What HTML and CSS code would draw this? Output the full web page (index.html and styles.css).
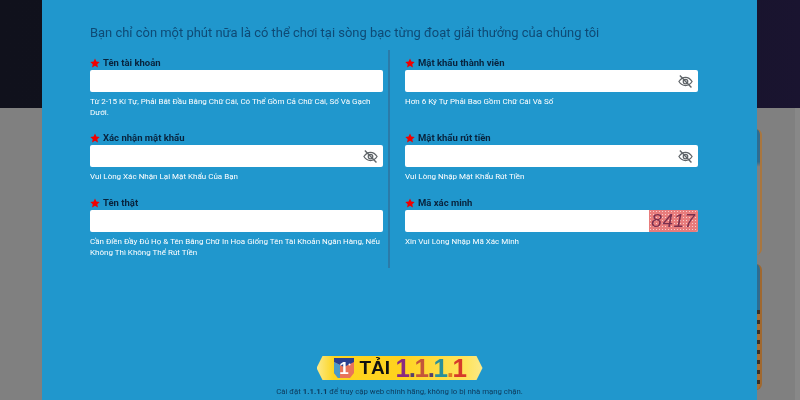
FILE: index.html
```html
<!DOCTYPE html>
<html lang="vi">
<head>
<meta charset="utf-8">
<title>Đăng ký</title>
<link rel="stylesheet" href="styles.css">
</head>
<body>
<svg class="defs" width="0" height="0" aria-hidden="true">
  <symbol id="star" viewBox="0 0 24 24"><path d="M12 1l3.4 7.3 7.9 1-5.8 5.4 1.5 7.9L12 18.7l-7 3.9 1.5-7.9L.7 9.3l7.9-1z"/></symbol>
  <symbol id="eye" viewBox="0 0 24 24">
    <path d="M1.5 12C4.5 7.5 8 5.5 12 5.5s7.500 2 10.500 6.500c-3 4.500-6.500 6.500-10.500 6.500S4.500 16.500 1.500 12z" fill="none" stroke="currentColor" stroke-width="2"/>
    <circle cx="12" cy="12" r="3.600" fill="none" stroke="currentColor" stroke-width="2"/>
    <path d="M3 2.500l18.500 19" fill="none" stroke="currentColor" stroke-width="2.200"/>
  </symbol>
</svg>
<div class="page">
  <div class="hero"></div>
  <div class="lower">
    <div class="cards">
      <div class="card"></div>
      <div class="card card-b"></div>
    </div>
  </div>
  <main class="modal">
    <h1 class="title">Bạn chỉ còn một phút nữa là có thể chơi tại sòng bạc từng đoạt giải thưởng của chúng tôi</h1>
    <form class="form">
      <div class="field left">
        <label class="label"><svg class="star"><use href="#star"/></svg>Tên tài khoản</label>
        <div class="input"></div>
        <p class="hint">Từ 2-15 Kí Tự, Phải Bắt Đầu Bằng Chữ Cái, Có Thể Gồm Cả Chữ Cái, Số Và Gạch Dưới.</p>
      </div>
      <div class="field right">
        <label class="label"><svg class="star"><use href="#star"/></svg>Mật khẩu thành viên</label>
        <div class="input"><svg class="eye"><use href="#eye"/></svg></div>
        <p class="hint">Hơn 6 Ký Tự Phải Bao Gồm Chữ Cái Và Số</p>
      </div>
      <div class="field left">
        <label class="label"><svg class="star"><use href="#star"/></svg>Xác nhận mật khẩu</label>
        <div class="input"><svg class="eye"><use href="#eye"/></svg></div>
        <p class="hint">Vui Lòng Xác Nhận Lại Mật Khẩu Của Bạn</p>
      </div>
      <div class="field right">
        <label class="label"><svg class="star"><use href="#star"/></svg>Mật khẩu rút tiền</label>
        <div class="input"><svg class="eye"><use href="#eye"/></svg></div>
        <p class="hint">Vui Lòng Nhập Mật Khẩu Rút Tiền</p>
      </div>
      <div class="field left last">
        <label class="label"><svg class="star"><use href="#star"/></svg>Tên thật</label>
        <div class="input"></div>
        <p class="hint">Cần Điền Đầy Đủ Họ &amp; Tên Bằng Chữ In Hoa Giống Tên Tài Khoản Ngân Hàng, Nếu Không Thì Không Thể Rút Tiền</p>
      </div>
      <div class="field right last">
        <label class="label"><svg class="star"><use href="#star"/></svg>Mã xác minh</label>
        <div class="input"><span class="captcha">8417</span></div>
        <p class="hint">Xin Vui Lòng Nhập Mã Xác Minh</p>
      </div>
    </form>
    <div class="promo">
      <div class="banner">
        <svg class="shield" viewBox="0 0 20 20">
          <path d="M0 0h20v15l-4 5H4l-4-5z" fill="#e8745a"/>
          <path d="M0 0h20v4l-10 5-10-5z" fill="#2a3f8f"/>
          <path d="M0 4l6 3v13H4l-4-5z" fill="#4a9ac8"/>
          <text x="10" y="16" class="shield-num">1</text>
          <circle cx="15.500" cy="6.500" r="1" fill="#fff"/>
        </svg>
        <span class="tai">TẢI</span>
        <span class="ver"><span class="ch c1">1</span><span class="ch c0">.</span><span class="ch c2">1</span><span class="ch c0">.</span><span class="ch c3">1</span><span class="ch c4">.</span><span class="ch c5">1</span></span>
      </div>
      <p class="promo-text">Cài đặt <b>1.1.1.1</b> để truy cập web chính hãng, không lo bị nhà mạng chặn.</p>
    </div>
  </main>
</div>
</body>
</html>
```

FILE: styles.css
```css
* { box-sizing: border-box; }
html, body { margin: 0; padding: 0; }
body { font-family: Roboto, "Liberation Sans", Arial, sans-serif; background: #808080; }
.defs { position: absolute; }
.page { position: relative; width: 800px; height: 400px; overflow: hidden; display: flex; flex-direction: column; filter: blur(0.35px); }
.hero { height: 108px; flex: none; background: linear-gradient(90deg, #10111c 0%, #11121e 50%, #1a1430 100%); }
.lower { flex: 1; background: linear-gradient(90deg, #808080 0 795px, #888 795px); padding: 21px 0 0 700px; }
.cards { width: 62px; display: flex; flex-direction: column; gap: 9px; }
.card { height: 126px; border-radius: 6px; background: linear-gradient(180deg, #2f6c90 0 26%, #808080 30%); border-right: 2px solid #a9763f; }
.card-b { height: 126px; background: repeating-linear-gradient(180deg, #3a3028 0 4px, #a5703a 4px 10px) 0 46px no-repeat, linear-gradient(180deg, #2f6c90 0 100%); border-right-color: #a0682f; }

.modal { position: absolute; left: 42px; top: 0; width: 715px; height: 400px; background: #2097cd; padding: 24px 0 0 48px; display: flex; flex-direction: column; }
.title { margin: 0 0 9px; font-size: 12.950px; line-height: 17px; font-weight: 400; color: #0e4a75; white-space: nowrap; }
.form { display: grid; grid-template-columns: 300px 308px; grid-template-rows: 75px 65px 78px; margin: 0; }
.field { padding-top: 6px; }
.field.left { border-right: 2px solid #2a7ba9; padding-right: 5px; }
.field.right { padding-left: 15px; }
.label { display: flex; align-items: center; height: 13px; margin-bottom: 1px; font-size: 9.500px; font-weight: 700; color: #08233d; white-space: nowrap; }
.star { width: 10px; height: 10px; margin-right: 3px; fill: #f00000; flex: none; }
.input { height: 22px; background: #fff; border-radius: 2px; display: flex; align-items: center; justify-content: flex-end; overflow: hidden; }
.eye { width: 15px; height: 15px; margin-right: 5px; color: #5f6468; }
.captcha { width: 49px; height: 100%; text-align: center; font-family: "Liberation Sans", sans-serif; font-style: italic; font-size: 19px; line-height: 22px; letter-spacing: 0.500px; color: #7a2f4e;
  background-color: #e87c7c; background-image: radial-gradient(#f8caca 35%, transparent 40%); background-size: 3px 3px; }
.hint { margin: 5px 0 0; font-size: 8px; line-height: 10.500px; color: #fff; }

.promo { margin-top: 88px; margin-left: -48px; display: flex; flex-direction: column; align-items: center; }
.banner { width: 166px; height: 24px; display: flex; align-items: center; justify-content: center; gap: 5px; background: linear-gradient(90deg, #fbe98a 0%, #fdd51f 10%, #ffd21e 50%, #ffe45c 90%, #fbe98a 100%);
  clip-path: polygon(6px 0, 160px 0, 166px 50%, 160px 100%, 6px 100%, 0 50%); }
.shield { width: 20px; height: 20px; flex: none; }
.shield-num { fill: #fff; font-size: 17px; font-weight: 700; text-anchor: middle; font-family: "Liberation Sans", sans-serif; }
.tai { font-size: 19px; line-height: 24px; font-weight: 700; color: #111; font-family: "Liberation Sans", sans-serif; margin-right: 3px; }
.ver { display: flex; font-size: 26px; line-height: 24px; font-weight: 700; font-family: "Liberation Sans", sans-serif; }
.ch { width: 9.500px; display: flex; justify-content: center; }
.c0 { color: #55406a; } .c1 { color: #8a2a80; } .c2 { color: #c4563a; } .c3 { color: #2a8f9a; } .c4 { color: #e07a20; } .c5 { color: #d63a2a; }
.promo-text { margin: 7px 0 0; font-size: 7.800px; line-height: 10px; color: #0d3a5c; white-space: nowrap; }
```
